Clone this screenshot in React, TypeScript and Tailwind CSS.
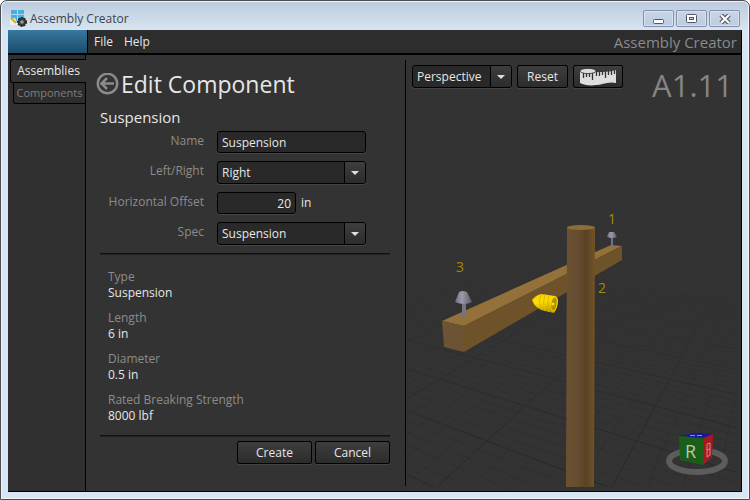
import { useState } from 'react'
import type { ReactNode } from 'react'

const SPACING = 35
const HORIZON = 172
const FLOOR = 487

const details = [
  { label: 'Type', value: 'Suspension' },
  { label: 'Length', value: '6 in' },
  { label: 'Diameter', value: '0.5 in' },
  { label: 'Rated Breaking Strength', value: '8000 lbf' },
]

interface SelectProps {
  id?: string
  label?: string
  options: string[]
  className: string
}

function Select({ id, label, options, className }: SelectProps) {
  return (
    <div className={`grid h-[23px] ${className}`}>
      <select
        id={id}
        aria-label={label}
        className="col-start-1 row-start-1 w-full min-w-0 appearance-none rounded-[3px] border border-black bg-[#292929] px-1 pt-px text-xs text-[#e6e6e6] shadow-[0_1px_0_#444]"
      >
        {options.map((o) => (
          <option key={o}>{o}</option>
        ))}
      </select>
      <span className="pointer-events-none col-start-1 row-start-1 my-px mr-px flex w-[21px] items-center justify-center justify-self-end rounded-r-[2px] border-l border-black bg-linear-to-b from-[#3e3e3e] to-[#2c2c2c]">
        <svg width="8" height="4" viewBox="0 0 8 4" fill="#e0e0e0">
          <path d="M0 0h8L4 4z" />
        </svg>
      </span>
    </div>
  )
}

function PushButton({ label, children, className }: { label?: string; children: ReactNode; className: string }) {
  return (
    <button
      type="button"
      aria-label={label}
      className={`flex h-[23px] items-center justify-center rounded-[2px] border border-black bg-linear-to-b from-[#3e3e3e] to-[#2c2c2c] text-xs text-[#e6e6e6] shadow-[0_1px_0_#444] ${className}`}
    >
      {children}
    </button>
  )
}

function Field({ id, label, children }: { id: string; label: string; children: ReactNode }) {
  return (
    <div className="flex items-center gap-[13px]">
      <label htmlFor={id} className="w-[104px] shrink-0 pb-[3px] text-right text-xs whitespace-nowrap text-[#8c8c8c]">
        {label}
      </label>
      {children}
    </div>
  )
}

function CaptionButton({ label, children }: { label: string; children: ReactNode }) {
  return (
    <button
      type="button"
      aria-label={label}
      className="flex h-[17px] w-[31px] items-center justify-center rounded-[2px] border border-[#8391ae] bg-linear-to-b from-[#c8d5e6] to-[#bccbdf] shadow-[inset_0_0_0_1px_#d8e2ee]"
    >
      {children}
    </button>
  )
}

function AppIcon() {
  return (
    <svg width="17" height="17" viewBox="0 0 17 17">
      <rect x="1" width="13" height="13" fill="#48aee0" />
      <path d="M1 4.5h13M7.5 0v13" stroke="#a5dcf5" />
      <path d="M0 9l5-1 3 7H0z" fill="#e9eef2" />
      <path d="M1 8l5 5" stroke="#c9b32c" strokeWidth="2" />
      <circle cx="12" cy="12" r="4.200" fill="#3a3a3a" stroke="#222" strokeWidth="1.500" strokeDasharray="2 1" />
      <circle cx="12" cy="12" r="1.800" fill="#999" />
    </svg>
  )
}

function RulerIcon() {
  return (
    <svg width="37" height="18" viewBox="0 0 37 18">
      <path d="M0 3C4 6 12 6 16 4c7 0 13 0 20-2v13c-8-2-14 2-20 2-6 1-12 0-16-2z" fill="#dedede" />
      <path
        d="M3.500 5v5M6.500 5v4M9.500 5v4M12.500 5v7M16.500 4v4M19.500 4v4M22.500 3v4M25.500 3v7M28.500 3v4M31.500 3v4M34.500 2v4"
        stroke="#333"
        strokeWidth="1.300"
      />
      <ellipse cx="8" cy="3" rx="8" ry="2.600" fill="#dedede" stroke="#333" strokeWidth="0.800" />
    </svg>
  )
}

function FloorGrid() {
  const lines = Array.from({ length: 75 }, (_, i) => i - 25)
  return (
    <g mask="url(#fade)">
      {lines.map((n) => (
        <g key={n} stroke="#292929" strokeWidth="1" strokeOpacity={n % 5 === 0 ? 0.9 : 0.3}>
          <line x1="780" y1={HORIZON} x2={437 + n * SPACING} y2={FLOOR} />
          <line x1="-220" y1={HORIZON} x2={433 + n * SPACING} y2={FLOOR} />
        </g>
      ))}
    </g>
  )
}

function Scene() {
  return (
    <svg
      viewBox="407 55 334 436"
      preserveAspectRatio="xMaxYMax meet"
      className="col-start-1 row-start-1 h-full w-full font-['Open_Sans','Noto_Sans',sans-serif]"
    >
      <defs>
        <linearGradient id="pole">
          <stop offset="0" stopColor="#6b5132" />
          <stop offset="0.4" stopColor="#664d2f" />
          <stop offset="0.7" stopColor="#5a4325" />
          <stop offset="1" stopColor="#745326" />
        </linearGradient>
        <linearGradient id="cap">
          <stop offset="0" stopColor="#6f6f7a" />
          <stop offset="0.4" stopColor="#9a9aaa" />
          <stop offset="1" stopColor="#5c5c68" />
        </linearGradient>
        <linearGradient id="gold" x2="0.3" y2="1">
          <stop offset="0" stopColor="#f2d000" />
          <stop offset="0.5" stopColor="#ffdc00" />
          <stop offset="1" stopColor="#b99a00" />
        </linearGradient>
        <linearGradient id="depth" x2="0" y2="1">
          <stop offset="0.46" stopColor="#000" />
          <stop offset="0.9" stopColor="#fff" />
        </linearGradient>
        <mask id="fade" maskUnits="userSpaceOnUse" x="407" y="55" width="334" height="436">
          <rect x="407" y="55" width="330" height="432" fill="url(#depth)" />
        </mask>
      </defs>

      <FloorGrid />

      {/* crossarm */}
      <path d="M442 321L611 245l11 1-158 80z" fill="#94713a" />
      <path d="M464 326L622 246v14L464 352z" fill="#6d522a" />
      <path d="M442 321l22 5v26l-20-5z" fill="#6c5334" />

      {/* pins */}
      <path d="M462 303h4v15h-4z" fill="#74747f" />
      <path d="M459 292q4-2 8 0l5 10q-8 4-17 0z" fill="url(#cap)" />
      <path d="M611 236h2v11h-2z" fill="#74747f" />
      <path d="M609 232h5l3 5q-5 2-10 0z" fill="url(#cap)" />

      {/* selected component */}
      <path d="M532 300q4-5 9-6l14 2q3 1 3 6-1 7-4 11l-9-2q-10-2-13-11z" fill="url(#gold)" />
      <path d="M541 294q-3 8 0 15M545 294q-3 9 0 17M549 295q-3 9 0 17" fill="none" stroke="#dcb900" />
      <ellipse cx="554" cy="304" rx="3" ry="7" fill="#ae9000" stroke="#f5d200" transform="rotate(8 554 304)" />
      <circle cx="553" cy="304" r="1.500" fill="#ffe100" />

      {/* pole */}
      <path d="M567 228h28l-1 259h-28z" fill="url(#pole)" />
      <ellipse cx="581" cy="227.500" rx="14" ry="2.500" fill="#8f6c38" />

      <g fill="#a08a08" fontSize="14">
        <text x="608" y="224">1</text>
        <text x="598" y="293">2</text>
        <text x="456" y="272">3</text>
      </g>

      {/* view cube */}
      <ellipse cx="697" cy="461" rx="28" ry="11" fill="none" stroke="#5c5c5c" strokeWidth="6" />
      <path d="M679 436l16-3 18 1-10 4z" fill="#1717a0" />
      <path d="M679 436l24 2v27l-23-5z" fill="#1a5e1a" />
      <path d="M703 438l10-4-1 23-9 8z" fill="#a51a1c" />
      <path d="M690 435.500h5M697 435.500h5" stroke="#9292c8" />
      <text x="685" y="458" fontSize="18" fill="#b5c8b5">R</text>
      <path d="M707 444l3-1v12l-3 2zM707 450l3-1" fill="none" stroke="#d28a8a" />
    </svg>
  )
}

export default function App() {
  const [name, setName] = useState('Suspension')
  const [offset, setOffset] = useState('20')

  return (
    <div className="flex h-screen flex-col rounded-t-[7px] border border-[#4b4b52] bg-linear-to-b from-[#bccbdc] to-[#d8e5f2] to-[30px] px-[7px] pb-[7px] font-['Open_Sans','Noto_Sans',sans-serif] text-xs leading-4 shadow-[inset_0_0_0_1px_#eef4fa]">
      <header className="flex h-[29px] shrink-0 items-center justify-between">
        <h1 className="flex items-center gap-[3px] pt-[6px] pl-[2px] text-xs text-[#3c4450]">
          <AppIcon />
          Assembly Creator
        </h1>
        <div className="flex gap-[2px] pt-[6px] pr-[2px]">
          <CaptionButton label="Minimize">
            <svg width="12" height="10" viewBox="0 0 12 10">
              <rect x="0.500" y="5.500" width="10" height="4" rx="1" fill="#fff" stroke="#535666" />
            </svg>
          </CaptionButton>
          <CaptionButton label="Maximize">
            <svg width="12" height="10" viewBox="0 0 12 10" fill="#fff" stroke="#535666">
              <rect x="0.500" y="0.500" width="10" height="8" rx="1" />
              <rect x="3.500" y="3.500" width="4" height="2" fill="#c4d1e3" />
            </svg>
          </CaptionButton>
          <CaptionButton label="Close">
            <svg width="12" height="10" viewBox="0 0 12 10">
              <path d="M2 1l8 8M10 1L2 9" stroke="#535666" strokeWidth="4.500" />
              <path d="M2 1l8 8M10 1L2 9" stroke="#fff" strokeWidth="2.200" />
            </svg>
          </CaptionButton>
        </div>
      </header>

      <div className="flex min-h-0 flex-1 flex-col border-r border-b border-black bg-[#323232]">
        <nav className="flex h-[25px] shrink-0 items-center border-b-2 border-black bg-[#2d2d2d] text-[#e6e6e6]">
          <div className="h-full w-[80px] border-r border-black bg-linear-to-b from-[#38789f] to-[#1b4d6d]" />
          <button type="button" className="ml-[6px]">File</button>
          <button type="button" className="ml-[11px]">Help</button>
          <span className="ml-auto pr-[4px] text-[15px] text-[#8a8a8a]">Assembly Creator</span>
        </nav>

        <div className="flex min-h-0 flex-1">
          <aside className="flex w-[78px] shrink-0 flex-col items-end border-r border-black bg-[#303030] pt-[4px]">
            <button
              type="button"
              className="z-10 -mr-px h-[24px] w-[76px] rounded-l-[3px] border border-r-0 border-black bg-[#333] text-[#e6e6e6]"
            >
              Assemblies
            </button>
            <button
              type="button"
              className="h-[21px] w-[72px] rounded-bl-[3px] border border-t-0 border-r-0 border-black bg-[#2d2d2d] text-[11px] text-[#7d7d7d]"
            >
              Components
            </button>
          </aside>

          <main className="flex w-[319px] shrink-0 flex-col bg-[#333] pt-[14px] pr-[15px] pl-[14px]">
            <div className="-ml-[4px] flex h-[30px] items-center gap-[2px]">
              <button type="button" aria-label="Back">
                <svg width="23" height="23" viewBox="0 0 23 23" fill="none" stroke="#8a8a8a" strokeWidth="2.500">
                  <circle cx="11.500" cy="10.500" r="9.700" />
                  <path d="M18 10.500H6M11 5l-5.500 5.500L11 16" />
                </svg>
              </button>
              <h2 className="text-[23px] whitespace-nowrap text-[#e6e6e6]">Edit Component</h2>
            </div>
            <h3 className="mt-[8px] text-[15px] leading-5 text-[#e6e6e6]">Suspension</h3>

            <form className="mt-[4px] flex flex-col gap-2">
              <Field id="name" label="Name">
                <input
                  id="name"
                  value={name}
                  onChange={(e) => setName(e.target.value)}
                  className="h-[22px] w-[149px] rounded-[3px] border border-black bg-[#292929] px-1 pt-px text-[#e6e6e6] shadow-[0_1px_0_#444]"
                />
              </Field>
              <Field id="side" label="Left/Right">
                <Select id="side" options={['Right', 'Left']} className="w-[149px]" />
              </Field>
              <Field id="offset" label="Horizontal Offset">
                <div className="flex items-center gap-[5px] text-[#e6e6e6]">
                  <input
                    id="offset"
                    value={offset}
                    onChange={(e) => setOffset(e.target.value)}
                    className="h-[22px] w-[79px] rounded-[3px] border border-black bg-[#292929] px-1 pt-px text-right shadow-[0_1px_0_#444]"
                  />
                  in
                </div>
              </Field>
              <Field id="spec" label="Spec">
                <Select id="spec" options={['Suspension']} className="w-[149px]" />
              </Field>
            </form>

            <hr className="mt-2 h-[2px] border-t border-b border-t-[#111] border-b-[#222]" />

            <dl className="mt-[14px] flex flex-col gap-[9px] pl-[8px]">
              {details.map((d) => (
                <div key={d.label}>
                  <dt className="text-[#8c8c8c]">{d.label}</dt>
                  <dd className="text-[#e6e6e6]">{d.value}</dd>
                </div>
              ))}
            </dl>

            <hr className="mt-[11px] h-[2px] border-t border-b border-t-[#111] border-b-[#222]" />

            <div className="mt-[4px] flex justify-end gap-[3px]">
              <PushButton className="w-[75px]">Create</PushButton>
              <PushButton className="w-[75px]">Cancel</PushButton>
            </div>
          </main>

          <div className="my-[5px] w-px shrink-0 bg-black" />

          <section className="grid min-w-0 flex-1 grid-cols-1 grid-rows-1 bg-[#333]">
            <Scene />
            <div className="z-10 col-start-1 row-start-1 flex items-start gap-[5px] self-start pt-[10px] pr-[8px] pl-[6px]">
              <Select label="View" options={['Perspective', 'Orthographic']} className="w-[100px]" />
              <PushButton className="w-[51px]">Reset</PushButton>
              <PushButton label="Measure" className="w-[50px]">
                <RulerIcon />
              </PushButton>
              <span className="ml-auto pt-[4px] text-[31px] leading-8 text-[#858585]">A1.11</span>
            </div>
          </section>
        </div>
      </div>
    </div>
  )
}
